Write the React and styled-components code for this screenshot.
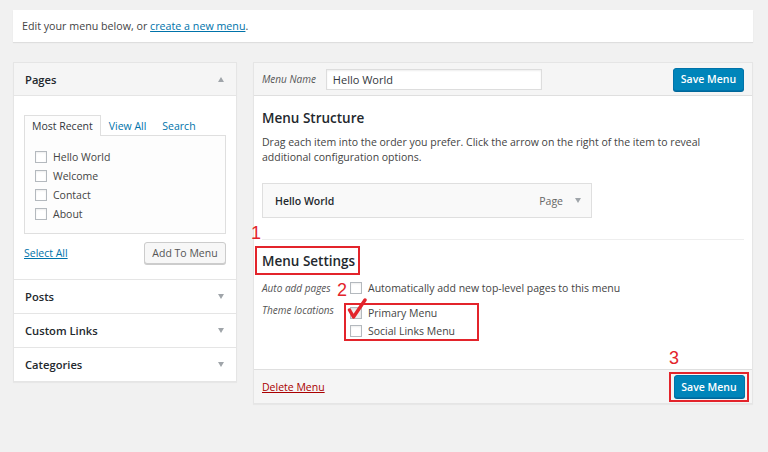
import React from "react";
import styled, { createGlobalStyle } from "styled-components";

const Global = createGlobalStyle`
  html, body { margin: 0; padding: 0; background: #f1f1f1; }
  body { font-family: "Open Sans", "Liberation Sans", sans-serif; color: #444; font-size: 10.5px; }
  * { box-sizing: border-box; }
`;

const Page = styled.div`
  width: 768px;
  height: 452px;
  padding: 10px 15px 0 13px;
`;

const Notice = styled.div`
  height: 32px;
  background: #fff;
  box-shadow: 0 1px 1px rgba(0, 0, 0, 0.08);
  display: flex;
  align-items: center;
  padding: 0 9px;
  font-size: 10.7px;
  color: #444;
`;

const Link = styled.a`
  color: ${(p) => p.$color || "#0073aa"};
  text-decoration: underline;
  cursor: pointer;
`;

const Columns = styled.div`
  display: flex;
  align-items: flex-start;
  gap: 16px;
  margin-top: 20px;
`;

const SidePanel = styled.div`
  width: 224px;
  background: #fff;
  border: 1px solid #e5e5e5;
  box-shadow: 0 1px 1px rgba(0, 0, 0, 0.04);
`;

const SectionHead = styled.div`
  height: ${(p) => p.$h || 34}px;
  display: flex;
  align-items: center;
  justify-content: space-between;
  padding: 0 12px 0 11px;
  font-size: 11.2px;
  font-weight: 600;
  color: #23282d;
  background: ${(p) => (p.$open ? "#f5f5f5" : "#fff")};
  border-top: ${(p) => (p.$first ? "none" : "1px solid #e5e5e5")};
  border-bottom: ${(p) => (p.$open ? "1px solid #e5e5e5" : "none")};
`;

const Caret = styled.span`
  width: 0;
  height: 0;
  flex: none;
  border-left: 3.5px solid transparent;
  border-right: 3.5px solid transparent;
  ${(p) =>
    p.$up
      ? "border-bottom: 5px solid #a0a5aa;"
      : "border-top: 5px solid #a0a5aa;"}
`;

const SectionBody = styled.div`
  padding: 19px 10px 15px 10px;
`;

const Tabs = styled.div`
  display: flex;
  align-items: flex-end;
  height: 20px;
`;

const Tab = styled.div`
  height: 21px;
  padding: 0 7px;
  display: flex;
  align-items: center;
  font-size: 10.5px;
  color: ${(p) => (p.$active ? "#32373c" : "#0073aa")};
  background: ${(p) => (p.$active ? "#fdfdfd" : "transparent")};
  border: 1px solid ${(p) => (p.$active ? "#dfdfdf" : "transparent")};
  border-bottom: none;
  margin-bottom: -1px;
  position: relative;
  z-index: 1;
`;

const TabPanel = styled.div`
  height: 99px;
  border: 1px solid #dfdfdf;
  background: #fdfdfd;
  padding: 11px 10px 0 10px;
  display: flex;
  flex-direction: column;
`;

const CheckRow = styled.label`
  height: ${(p) => p.$h || 19}px;
  flex: none;
  display: flex;
  align-items: center;
  gap: 6px;
  font-size: 10.5px;
  color: #444;
  white-space: nowrap;
`;

const Box = styled.span`
  width: 12px;
  height: 12px;
  flex: none;
  border: 1px solid #b4b9be;
  background: ${(p) => (p.$checked ? "#eee" : "#fff")};
  box-shadow: inset 0 1px 2px rgba(0, 0, 0, 0.07);
`;

const BodyFoot = styled.div`
  display: flex;
  justify-content: space-between;
  align-items: center;
  margin-top: 8px;
`;

const GhostButton = styled.button`
  height: 22px;
  width: 82px;
  padding: 0;
  font-family: inherit;
  font-size: 10.5px;
  color: #555;
  background: #f7f7f7;
  border: 1px solid #ccc;
  border-radius: 3px;
  box-shadow: 0 1px 0 #ccc;
`;

const MainPanel = styled.div`
  width: 500px;
  background: #fff;
  border: 1px solid #e5e5e5;
  box-shadow: 0 1px 1px rgba(0, 0, 0, 0.04);
`;

const MainHead = styled.div`
  height: 33px;
  background: #f5f5f5;
  border-bottom: 1px solid #dfdfdf;
  display: flex;
  align-items: center;
  padding: 0 8px;
  gap: 10px;
`;

const ItalicLabel = styled.span`
  font-style: italic;
  font-size: 10px;
  line-height: 14px;
  color: #555;
  width: ${(p) => (p.$w ? p.$w + "px" : "auto")};
  flex: none;
`;

const NameInput = styled.div`
  width: 216px;
  height: 21px;
  background: #fff;
  border: 1px solid #ddd;
  box-shadow: inset 0 1px 2px rgba(0, 0, 0, 0.07);
  display: flex;
  align-items: center;
  padding: 0 6px;
  font-size: 11px;
  color: #32373c;
`;

const PrimaryButton = styled.button`
  margin-left: ${(p) => (p.$push ? "auto" : "0")};
  height: 23px;
  width: 71px;
  flex: none;
  padding: 0;
  font-family: inherit;
  font-size: 10.5px;
  font-weight: 600;
  color: #fff;
  background: #0085ba;
  border: 1px solid #0073aa;
  border-radius: 3px;
  box-shadow: 0 1px 0 #006799;
`;

const MainBody = styled.div`
  padding: 12px 8px 0 8px;
  position: relative;
`;

const H3 = styled.h3`
  margin: 0;
  font-size: 13.5px;
  font-weight: 600;
  color: #23282d;
  line-height: 20px;
  white-space: nowrap;
`;

const Para = styled.p`
  margin: 7px 0 0 0;
  font-size: 10.5px;
  line-height: 15px;
  color: #444;
`;

const MenuItem = styled.div`
  width: 330px;
  height: 35px;
  margin-top: 18px;
  background: #f9f9f9;
  border: 1px solid #dfdfdf;
  display: flex;
  align-items: center;
  padding: 0 10px 0 12px;
  font-size: 10.5px;
`;

const ItemTitle = styled.span`
  font-weight: 600;
  color: #23282d;
`;

const ItemType = styled.span`
  margin-left: auto;
  color: #666;
  margin-right: 12px;
`;

const Divider = styled.div`
  border-top: 1px solid #eee;
  margin-top: 21px;
`;

const Annot = styled.span`
  position: absolute;
  left: ${(p) => p.$x}px;
  top: ${(p) => p.$y}px;
  font-family: "Liberation Sans", Arial, sans-serif;
  font-size: 18px;
  line-height: 18px;
  color: #e3242b;
`;

const RedFrame = styled.div`
  border: 2px solid #e3242b;
  display: flex;
`;

const SettingsTitle = styled(RedFrame)`
  margin: 6px 0 0 -7px;
  width: 105px;
  height: 29px;
  align-items: center;
  padding-left: 5px;
`;

const SettingRow = styled.div`
  display: flex;
  align-items: flex-start;
  margin-top: ${(p) => p.$mt || 0}px;
`;

const LocBox = styled(RedFrame)`
  flex-direction: column;
  width: 135px;
  height: 38px;
  margin-left: -6px;
  padding: 0 0 0 4px;
  position: relative;
`;

const Check = styled.svg`
  position: absolute;
  left: 1px;
  top: -7px;
`;

const MainFoot = styled.div`
  margin-top: 28px;
  height: 34px;
  background: #f5f5f5;
  border-top: 1px solid #dfdfdf;
  display: flex;
  align-items: center;
  justify-content: space-between;
  padding: 0 3px 0 8px;
  position: relative;
`;

const SaveFrame = styled(RedFrame)`
  width: 80px;
  height: 30px;
  align-items: center;
  justify-content: center;
  padding: 0;
`;

export default function App() {
  return (
    <>
      <Global />
      <Page>
        <Notice>
          Edit your menu below, or&nbsp;<Link>create a new menu</Link>.
        </Notice>
        <Columns>
          <SidePanel>
            <SectionHead $open $first $h={33}>
              Pages <Caret $up />
            </SectionHead>
            <SectionBody>
              <Tabs>
                <Tab $active>Most Recent</Tab>
                <Tab>View All</Tab>
                <Tab>Search</Tab>
              </Tabs>
              <TabPanel>
                {["Hello World", "Welcome", "Contact", "About"].map((t) => (
                  <CheckRow key={t}>
                    <Box />
                    {t}
                  </CheckRow>
                ))}
              </TabPanel>
              <BodyFoot>
                <Link>Select All</Link>
                <GhostButton>Add To Menu</GhostButton>
              </BodyFoot>
            </SectionBody>
            {["Posts", "Custom Links", "Categories"].map((t) => (
              <SectionHead key={t}>
                {t} <Caret />
              </SectionHead>
            ))}
          </SidePanel>

          <MainPanel>
            <MainHead>
              <ItalicLabel>Menu Name</ItalicLabel>
              <NameInput>Hello World</NameInput>
              <PrimaryButton $push>Save Menu</PrimaryButton>
            </MainHead>
            <MainBody>
              <H3>Menu Structure</H3>
              <Para>
                Drag each item into the order you prefer. Click the arrow on the
                right of the item to reveal additional configuration options.
              </Para>
              <MenuItem>
                <ItemTitle>Hello World</ItemTitle>
                <ItemType>Page</ItemType>
                <Caret />
              </MenuItem>
              <Divider />
              <Annot $x={-3} $y={128}>1</Annot>
              <SettingsTitle>
                <H3>Menu Settings</H3>
              </SettingsTitle>
              <SettingRow $mt={6}>
                <ItalicLabel $w={88}>Auto add pages</ItalicLabel>
                <CheckRow $h={14}>
                  <Box />
                  Automatically add new top-level pages to this menu
                </CheckRow>
              </SettingRow>
              <Annot $x={83} $y={185}>2</Annot>
              <SettingRow $mt={8}>
                <ItalicLabel $w={88}>Theme locations</ItalicLabel>
                <LocBox>
                  <CheckRow $h={16}>
                    <Box $checked />
                    Primary Menu
                  </CheckRow>
                  <CheckRow $h={19}>
                    <Box />
                    Social Links Menu
                  </CheckRow>
                  <Check width="20" height="22" viewBox="0 0 20 22">
                    <path
                      d="M2.5 12 L6.5 19 L18 2"
                      fill="none"
                      stroke="#e3242b"
                      strokeWidth="3.4"
                      strokeLinecap="round"
                      strokeLinejoin="round"
                    />
                  </Check>
                </LocBox>
              </SettingRow>
            </MainBody>
            <MainFoot>
              <Link $color="#a00">Delete Menu</Link>
              <Annot $x={415} $y={-21}>3</Annot>
              <SaveFrame>
                <PrimaryButton>Save Menu</PrimaryButton>
              </SaveFrame>
            </MainFoot>
          </MainPanel>
        </Columns>
      </Page>
    </>
  );
}
